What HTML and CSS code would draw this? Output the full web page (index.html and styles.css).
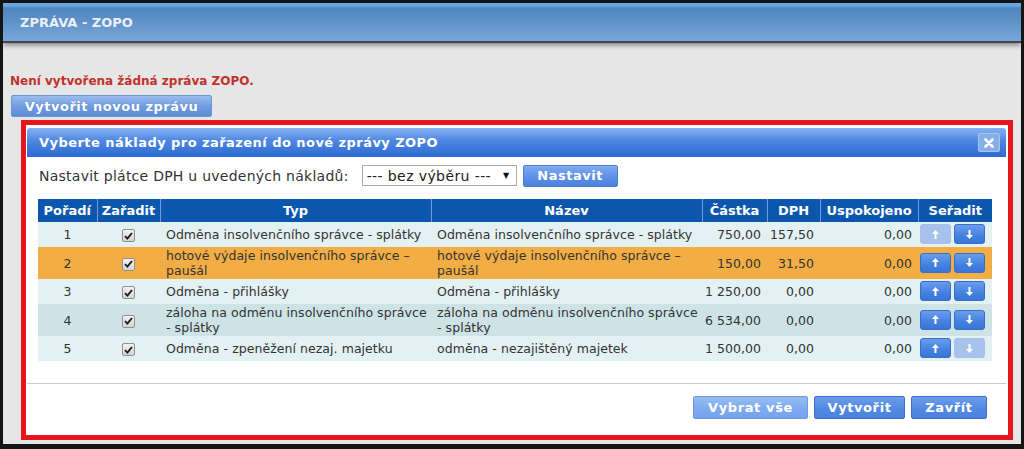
FILE: index.html
```html
<!DOCTYPE html>
<html lang="cs">
<head>
<meta charset="utf-8">
<title>Zpráva - ZOPO</title>
<link rel="stylesheet" href="styles.css">
</head>
<body>
<div class="frame">
  <header class="topbar"><span class="topbar-title">ZPRÁVA - ZOPO</span></header>
  <main class="content">
    <p class="error">Není vytvořena žádná zpráva ZOPO.</p>
    <button class="btn btn-main">Vytvořit novou zprávu</button>
    <div class="highlight">
      <section class="dialog">
        <div class="dialog-title">
          <span class="dialog-title-text">Vyberte náklady pro zařazení do nové zprávy ZOPO</span>
          <button class="close" aria-label="Zavřít"><svg width="10" height="10" viewBox="0 0 10 10"><path d="M1.5 1.5 L8.5 8.5 M8.5 1.5 L1.5 8.5" stroke="#fff" stroke-width="2.6" stroke-linecap="round"/></svg></button>
        </div>
        <div class="dialog-body">
          <div class="vat-row">
            <span class="vat-label">Nastavit plátce DPH u uvedených nákladů:</span>
            <div class="select"><span>--- bez výběru ---</span><span class="caret">▼</span></div>
            <button class="btn btn-set">Nastavit</button>
          </div>
          <table class="grid">
            <colgroup>
              <col class="c-ord"><col class="c-chk"><col class="c-typ"><col class="c-naz"><col class="c-cas"><col class="c-dph"><col class="c-usp"><col class="c-ser">
            </colgroup>
            <thead>
              <tr><th>Pořadí</th><th>Zařadit</th><th>Typ</th><th>Název</th><th>Částka</th><th>DPH</th><th>Uspokojeno</th><th>Seřadit</th></tr>
            </thead>
            <tbody>
              <tr class="odd">
                <td class="num-c">1</td>
                <td class="num-c"><span class="cb"><svg width="9" height="8" viewBox="0 0 9 8"><path d="M1 4.2 L3.4 6.6 L8 1" fill="none" stroke="#1b1b1b" stroke-width="1.9"/></svg></span></td>
                <td class="txt">Odměna insolvenčního správce - splátky</td>
                <td class="txt">Odměna insolvenčního správce - splátky</td>
                <td class="amt">750,00</td>
                <td class="amt">157,50</td>
                <td class="amt">0,00</td>
                <td class="sort"><div class="sort-btns"><button class="arrow off"><svg width="7" height="9" viewBox="0 0 7 9"><path d="M3.5 0 L7 4 H4.5 V9 H2.5 V4 H0 Z" fill="#fff"/></svg></button><button class="arrow"><svg width="7" height="9" viewBox="0 0 7 9"><path d="M3.5 9 L7 5 H4.5 V0 H2.5 V5 H0 Z" fill="#fff"/></svg></button></div></td>
              </tr>
              <tr class="sel">
                <td class="num-c">2</td>
                <td class="num-c"><span class="cb"><svg width="9" height="8" viewBox="0 0 9 8"><path d="M1 4.2 L3.4 6.6 L8 1" fill="none" stroke="#1b1b1b" stroke-width="1.9"/></svg></span></td>
                <td class="txt">hotové výdaje insolvenčního správce – paušál</td>
                <td class="txt">hotové výdaje insolvenčního správce – paušál</td>
                <td class="amt">150,00</td>
                <td class="amt">31,50</td>
                <td class="amt">0,00</td>
                <td class="sort"><div class="sort-btns"><button class="arrow"><svg width="7" height="9" viewBox="0 0 7 9"><path d="M3.5 0 L7 4 H4.5 V9 H2.5 V4 H0 Z" fill="#fff"/></svg></button><button class="arrow"><svg width="7" height="9" viewBox="0 0 7 9"><path d="M3.5 9 L7 5 H4.5 V0 H2.5 V5 H0 Z" fill="#fff"/></svg></button></div></td>
              </tr>
              <tr class="odd">
                <td class="num-c">3</td>
                <td class="num-c"><span class="cb"><svg width="9" height="8" viewBox="0 0 9 8"><path d="M1 4.2 L3.4 6.6 L8 1" fill="none" stroke="#1b1b1b" stroke-width="1.9"/></svg></span></td>
                <td class="txt">Odměna - přihlášky</td>
                <td class="txt">Odměna - přihlášky</td>
                <td class="amt">1&nbsp;250,00</td>
                <td class="amt">0,00</td>
                <td class="amt">0,00</td>
                <td class="sort"><div class="sort-btns"><button class="arrow"><svg width="7" height="9" viewBox="0 0 7 9"><path d="M3.5 0 L7 4 H4.5 V9 H2.5 V4 H0 Z" fill="#fff"/></svg></button><button class="arrow"><svg width="7" height="9" viewBox="0 0 7 9"><path d="M3.5 9 L7 5 H4.5 V0 H2.5 V5 H0 Z" fill="#fff"/></svg></button></div></td>
              </tr>
              <tr class="even">
                <td class="num-c">4</td>
                <td class="num-c"><span class="cb"><svg width="9" height="8" viewBox="0 0 9 8"><path d="M1 4.2 L3.4 6.6 L8 1" fill="none" stroke="#1b1b1b" stroke-width="1.9"/></svg></span></td>
                <td class="txt">záloha na odměnu insolvenčního správce - splátky</td>
                <td class="txt">záloha na odměnu insolvenčního správce - splátky</td>
                <td class="amt">6&nbsp;534,00</td>
                <td class="amt">0,00</td>
                <td class="amt">0,00</td>
                <td class="sort"><div class="sort-btns"><button class="arrow"><svg width="7" height="9" viewBox="0 0 7 9"><path d="M3.5 0 L7 4 H4.5 V9 H2.5 V4 H0 Z" fill="#fff"/></svg></button><button class="arrow"><svg width="7" height="9" viewBox="0 0 7 9"><path d="M3.5 9 L7 5 H4.5 V0 H2.5 V5 H0 Z" fill="#fff"/></svg></button></div></td>
              </tr>
              <tr class="odd">
                <td class="num-c">5</td>
                <td class="num-c"><span class="cb"><svg width="9" height="8" viewBox="0 0 9 8"><path d="M1 4.2 L3.4 6.6 L8 1" fill="none" stroke="#1b1b1b" stroke-width="1.9"/></svg></span></td>
                <td class="txt">Odměna - zpeněžení nezaj. majetku</td>
                <td class="txt">odměna - nezajištěný majetek</td>
                <td class="amt">1&nbsp;500,00</td>
                <td class="amt">0,00</td>
                <td class="amt">0,00</td>
                <td class="sort"><div class="sort-btns"><button class="arrow"><svg width="7" height="9" viewBox="0 0 7 9"><path d="M3.5 0 L7 4 H4.5 V9 H2.5 V4 H0 Z" fill="#fff"/></svg></button><button class="arrow off"><svg width="7" height="9" viewBox="0 0 7 9"><path d="M3.5 9 L7 5 H4.5 V0 H2.5 V5 H0 Z" fill="#fff"/></svg></button></div></td>
              </tr>
            </tbody>
          </table>
        </div>
        <div class="dialog-footer">
          <button class="btn btn-foot btn-light">Vybrat vše</button>
          <button class="btn btn-foot">Vytvořit</button>
          <button class="btn btn-foot">Zavřít</button>
        </div>
      </section>
    </div>
  </main>
</div>
</body>
</html>
```

FILE: styles.css
```css
html, body {
  margin: 0;
  padding: 0;
  background: #e6e6e6;
}

body {
  font-family: "DejaVu Sans", Verdana, sans-serif;
  font-size: 13px;
  color: #333;
}

.frame {
  width: 1024px;
  height: 449px;
  box-sizing: border-box;
  border: 3px solid #151515;
  border-bottom-width: 5px;
  background: #e6e6e6;
  overflow: hidden;
}

.topbar {
  height: 38px;
  background: linear-gradient(to bottom, #64aade 0, #64aade 3px, #4f84be 5px, #7aa7d8 100%);
  border-bottom: 2px solid #43474f;
  box-shadow: 0 2px 5px rgba(0, 0, 0, 0.45);
  display: flex;
  align-items: center;
  padding-left: 17px;
}

.topbar-title {
  color: #e9f0f9;
  font-weight: bold;
  font-size: 13px;
}

.content {
  padding-left: 7px;
}

.error {
  margin: 30px 0 0 0;
  line-height: 16px;
  font-size: 12px;
  font-weight: bold;
  color: #c1322b;
}

.btn {
  font-family: "DejaVu Sans", Verdana, sans-serif;
  font-weight: bold;
  font-size: 13px;
  color: #fff;
  border-radius: 2px;
  cursor: pointer;
  padding: 0;
}

.btn-main {
  display: block;
  margin: 6px 0 0 1px;
  width: 201px;
  height: 22px;
  border: 1px solid #6d95cf;
  background: linear-gradient(to bottom, #9bbcec 0, #6f9be0 55%, #5d8cd8 100%);
  text-shadow: 0 0 1px rgba(40, 70, 130, 0.4);
  letter-spacing: 0.5px;
}

.highlight {
  margin: 3px 0 0 11px;
  width: 992px;
  height: 320px;
  box-sizing: border-box;
  border: 5px solid #e5161d;
  background: #fff;
  padding: 3px 2px 0 1px;
  display: flex;
}

.dialog {
  flex: 1;
  display: flex;
  flex-direction: column;
  background: #fff;
}

.dialog-title {
  height: 29px;
  border-radius: 3px 3px 0 0;
  background: linear-gradient(to bottom, #86b2f2 0, #4c86e2 45%, #2e6bd2 100%);
  display: flex;
  align-items: center;
  justify-content: space-between;
  padding: 0 6px 0 12px;
}

.dialog-title-text {
  color: #fff;
  font-weight: bold;
  font-size: 13px;
  letter-spacing: 0.45px;
}

.close {
  width: 22px;
  height: 19px;
  border: 1px solid #a9c4ef;
  border-radius: 2px;
  background: #88aeea;
  display: flex;
  align-items: center;
  justify-content: center;
  padding: 0;
}

.dialog-body {
  padding: 8px 14px 0 11px;
}

.vat-row {
  display: flex;
  align-items: center;
  height: 21px;
  padding-left: 1px;
}

.vat-label {
  font-size: 14px;
  letter-spacing: 0.25px;
  color: #333;
}

.select {
  margin-left: 13px;
  width: 155px;
  height: 21px;
  box-sizing: border-box;
  border: 1px solid #a9a9a9;
  background: #fff;
  display: flex;
  align-items: center;
  justify-content: space-between;
  padding: 0 6px 0 4px;
  font-size: 14px;
  letter-spacing: 0.4px;
  color: #222;
}

.caret {
  font-size: 8px;
  color: #111;
}

.btn-set {
  margin-left: 6px;
  width: 95px;
  height: 22px;
  border: 1px solid #4a7fd0;
  background: linear-gradient(to bottom, #7eaaee 0, #5b8fe5 60%, #4b82dd 100%);
  letter-spacing: 0.5px;
}

.grid {
  margin-top: 13px;
  width: 954px;
  border-collapse: collapse;
  table-layout: fixed;
  font-size: 12.5px;
  letter-spacing: 0.05px;
}

.c-ord { width: 59px; }
.c-chk { width: 63px; }
.c-typ { width: 271px; }
.c-naz { width: 271px; }
.c-cas { width: 65px; }
.c-dph { width: 53px; }
.c-usp { width: 98px; }
.c-ser { width: 74px; }

.grid th {
  height: 23px;
  padding: 0;
  background: #0c57ad;
  color: #fff;
  font-weight: bold;
  font-size: 13px;
  letter-spacing: 0;
  border-left: 1px solid #6f9bd6;
  text-align: center;
}

.grid th:first-child {
  border-left: none;
}

.grid td {
  padding: 1px 0 1px 6px;
  line-height: 15px;
  color: #333;
  vertical-align: middle;
}

.grid tr.odd td { background: #e3f1f3; }
.grid tr.even td { background: #cde3e6; }
.grid tr.sel td { background: #f2ae45; }

.grid td.num-c {
  text-align: center;
  padding-left: 0;
  padding-right: 0;
}

.grid td.amt {
  text-align: right;
  padding-right: 6px;
  padding-left: 0;
}

.grid td.sort {
  padding: 2px 0 3px;
}

.cb {
  display: inline-flex;
  align-items: center;
  justify-content: center;
  width: 11px;
  height: 11px;
  border: 1px solid #8f9090;
  border-radius: 2px;
  background: linear-gradient(to bottom, #f2f2f2, #d4d4d4);
  vertical-align: middle;
}

.sort-btns {
  display: flex;
  gap: 3px;
  padding-left: 2px;
}

.arrow {
  width: 31px;
  height: 20px;
  border: 1px solid #3a6fc8;
  border-radius: 3px;
  background: linear-gradient(to bottom, #6a9ded 0, #4381e0 60%, #3775d8 100%);
  display: flex;
  align-items: center;
  justify-content: center;
  padding: 0;
}

.arrow.off {
  border-color: #a6c0e8;
  background: #a7c3ed;
}

.dialog-footer {
  margin-top: auto;
  border-top: 1px solid #cbcbcb;
  display: flex;
  justify-content: flex-end;
  gap: 6px;
  padding: 12px 19px 16px 0;
}

.btn-foot {
  height: 23px;
  border: 1px solid #3d72cc;
  background: linear-gradient(to bottom, #6e9ded 0, #5289e2 55%, #4a82dd 100%);
  letter-spacing: 0.6px;
}

.btn-foot:nth-child(1) { width: 115px; }
.btn-foot:nth-child(2) { width: 91px; }
.btn-foot:nth-child(3) { width: 76px; }

.btn-light {
  border-color: #6e9be0;
  background: linear-gradient(to bottom, #98bdf3 0, #7eaaf0 55%, #74a2ec 100%);
}
```
